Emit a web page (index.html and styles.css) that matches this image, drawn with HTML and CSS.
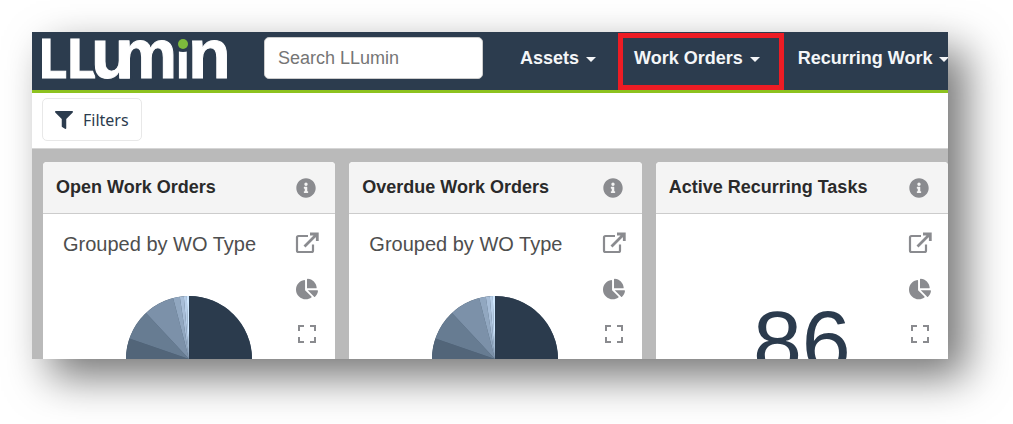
FILE: index.html
```html
<!DOCTYPE html>
<html lang="en">
<head>
    <meta charset="utf-8" />
    <title>LLumin</title>
    <link rel="stylesheet" href="styles.css">
</head>
<body>
    <svg class="sprite" aria-hidden="true">
        <symbol id="info" viewBox="0 0 512 512">
            <path d="M256 8C119 8 8 119 8 256s111 248 248 248 248-111 248-248S393 8 256 8zm0 110c23.200 0 42 18.800 42 42s-18.800 42-42 42-42-18.800-42-42 18.800-42 42-42zm56 254c0 6.600-5.400 12-12 12h-88c-6.600 0-12-5.400-12-12v-24c0-6.600 5.400-12 12-12h12v-64h-12c-6.600 0-12-5.400-12-12v-24c0-6.600 5.400-12 12-12h64c6.600 0 12 5.400 12 12v100h12c6.600 0 12 5.400 12 12z"/>
        </symbol>
        <symbol id="external" viewBox="0 0 24 22">
            <path d="M13 4H3.500a1.500 1.500 0 0 0-1.500 1.500v13a1.500 1.500 0 0 0 1.500 1.500h13a1.500 1.500 0 0 0 1.500-1.500V12.500" fill="none" stroke="currentColor" stroke-width="2.200"/>
            <path d="M9.500 14.500L21 3M15 2h7.300v7" fill="none" stroke="currentColor" stroke-width="2.800"/>
        </symbol>
        <symbol id="pie" viewBox="0 0 544 512">
            <path d="M527.800 288H290.500l158 158c6 6 15.800 6.500 21.900.5 38.700-36.500 65.300-85.700 73.100-141.100 1.400-9.200-6.500-17.400-15.700-17.400zM511.900 223.200C503.700 103.700 408.300 8.300 288.800.040 279.700-.6 272 7.100 272 16.200V240h223.800c9.200 0 16.800-7.700 16.100-16.800zM224 288V50.700c0-9.200-8.200-17.100-17.300-15.800C86.700 51.800-4.100 156.300.100 281.500 4.500 410.100 115.600 513.600 244.300 512c50.500-.6 97.300-16.900 135.500-44.200 7.900-5.600 8.400-17.200 1.600-24z"/>
        </symbol>
        <symbol id="expand" viewBox="0 0 20 20">
            <path d="M2 7V2h5M13 2h5v5M18 13v5h-5M7 18H2v-5" fill="none" stroke="currentColor" stroke-width="2"/>
        </symbol>
        <symbol id="chart" viewBox="0 0 126 126">
            <circle cx="63" cy="63" r="63" fill="#3d5064"/>
            <path fill="#2b3b4d" d="M63 63V0a63 63 0 0 1 0 126z"/>
            <path fill="#526579" d="M63 63L3.800 84.500A63 63 0 0 1 3.400 42.500z"/>
            <path fill="#677c92" d="M63 63L3.400 42.500A63 63 0 0 1 20 16.900z"/>
            <path fill="#7c91a9" d="M63 63L20 16.900A63 63 0 0 1 47.100 2z"/>
            <path fill="#91a7c0" d="M63 63L47.100 2A63 63 0 0 1 53.800 .7z"/>
            <path fill="#a7bdd7" d="M63 63L53.800 .7A63 63 0 0 1 57.800 .2z"/>
            <path fill="#b8cfe9" d="M63 63L57.800 .2A63 63 0 0 1 60.800 0z"/>
            <path fill="#d0e8ff" d="M63 63L60.800 0H63z"/>
        </symbol>
    </svg>

    <div class="screen">
        <header class="navbar">
            <a class="logo" href="#" aria-label="LLumin">
                <svg width="186" height="46" viewBox="0 0 186 46">
                    <text class="logo-cap" x="-5" y="43">L</text>
                    <text class="logo-cap" x="24" y="43">L</text>
                    <text class="logo-low logo-cut" x="49" y="43">u</text>
                    <text class="logo-low" x="49" y="43">u</text>
                    <text class="logo-low" x="73" y="43">m</text>
                    <text class="logo-i" x="134" y="43">i</text>
                    <text class="logo-low" x="146" y="43">n</text>
                    <circle cx="141" cy="9" r="8" fill="#2c3c4e"/>
                    <circle cx="141" cy="9" r="5" fill="#7dba3c"/>
                </svg>
            </a>
            <input class="search" type="text" placeholder="Search LLumin" aria-label="Search LLumin">
            <nav class="menu">
                <button class="menu-item">Assets</button>
                <button class="menu-item marked">Work Orders</button>
                <button class="menu-item">Recurring Work</button>
            </nav>
        </header>

        <div class="toolbar">
            <button class="filters">
                <svg width="18" height="18" viewBox="0 0 512 512" fill="currentColor"><path d="M488 0H24C2.700 0-8 25.900 7 41l185 185v206c0 8 4 15 10 20l80 56c16 11 38 0 38-20V226L505 41c15-15 4-41-17-41z"/></svg>
                Filters
            </button>
        </div>

        <main class="cards">
            <section class="card">
                <div class="card-head">
                    <h2>Open Work Orders</h2>
                    <button class="icon" aria-label="Info"><svg width="20" height="20"><use href="#info"/></svg></button>
                </div>
                <div class="card-body">
                    <div class="content">
                        <p class="group">Grouped by WO Type</p>
                        <svg class="chart" width="126" height="126"><use href="#chart"/></svg>
                    </div>
                    <div class="tools">
                        <button class="icon" aria-label="Open"><svg width="24" height="22"><use href="#external"/></svg></button>
                        <button class="icon" aria-label="Chart type"><svg width="22" height="22"><use href="#pie"/></svg></button>
                        <button class="icon" aria-label="Full screen"><svg width="20" height="20"><use href="#expand"/></svg></button>
                    </div>
                </div>
            </section>

            <section class="card">
                <div class="card-head">
                    <h2>Overdue Work Orders</h2>
                    <button class="icon" aria-label="Info"><svg width="20" height="20"><use href="#info"/></svg></button>
                </div>
                <div class="card-body">
                    <div class="content">
                        <p class="group">Grouped by WO Type</p>
                        <svg class="chart" width="126" height="126"><use href="#chart"/></svg>
                    </div>
                    <div class="tools">
                        <button class="icon" aria-label="Open"><svg width="24" height="22"><use href="#external"/></svg></button>
                        <button class="icon" aria-label="Chart type"><svg width="22" height="22"><use href="#pie"/></svg></button>
                        <button class="icon" aria-label="Full screen"><svg width="20" height="20"><use href="#expand"/></svg></button>
                    </div>
                </div>
            </section>

            <section class="card">
                <div class="card-head">
                    <h2>Active Recurring Tasks</h2>
                    <button class="icon" aria-label="Info"><svg width="20" height="20"><use href="#info"/></svg></button>
                </div>
                <div class="card-body">
                    <div class="content">
                        <p class="count">86</p>
                    </div>
                    <div class="tools">
                        <button class="icon" aria-label="Open"><svg width="24" height="22"><use href="#external"/></svg></button>
                        <button class="icon" aria-label="Chart type"><svg width="22" height="22"><use href="#pie"/></svg></button>
                        <button class="icon" aria-label="Full screen"><svg width="20" height="20"><use href="#expand"/></svg></button>
                    </div>
                </div>
            </section>
        </main>
    </div>
</body>
</html>
```
FILE: styles.css
```css
* {
    box-sizing: border-box;
}

body {
    margin: 0;
    padding: 32px 65px 65px 32px;
    height: 100vh;
    overflow: hidden;
    background-color: #FFF;
    font-family: "Liberation Sans", Arial, sans-serif;
}

button {
    margin: 0;
    padding: 0;
    border: none;
    background: none;
    font-family: inherit;
    cursor: pointer;
}

svg {
    display: block;
}

.sprite {
    position: absolute;
    width: 0;
    height: 0;
}

.screen {
    height: 100%;
    display: flex;
    flex-direction: column;
    overflow: hidden;
    background-color: #BABABA;
    box-shadow: 18px 18px 40px rgba(0, 0, 0, 0.54);
}

.navbar {
    flex: none;
    display: flex;
    align-items: flex-start;
    height: 61px;
    padding: 0 0 0 10px;
    background-color: #2C3C4E;
    border-bottom: 3px solid #8DC21F;
}

.logo {
    flex: none;
    padding-top: 3px;
}

.logo text {
    fill: #FFF;
    stroke: #FFF;
    stroke-width: 1px;
    font-weight: bold;
}

.logo-cap {
    font-family: "Open Sans", sans-serif;
    font-size: 54px;
}

.logo-low {
    font-size: 70px;
}

.logo-i {
    font-size: 49px;
}

.logo .logo-cut {
    stroke: #2C3C4E;
    stroke-width: 6px;
}

.search {
    flex: none;
    width: 219px;
    height: 42px;
    margin: 5px 18px 0 36px;
    padding: 0 13px;
    border: 1px solid #CCC;
    border-radius: 5px;
    background-color: #FFF;
    font-family: inherit;
    font-size: 18px;
}

.search::placeholder {
    color: #757575;
    opacity: 1;
}

.menu {
    display: flex;
    flex: none;
}

.menu-item {
    position: relative;
    display: flex;
    align-items: center;
    gap: 7px;
    height: 52px;
    padding: 0 19px;
    color: #F4F6F8;
    font-size: 18px;
    font-weight: bold;
    white-space: nowrap;
}

.menu-item::after {
    content: "";
    margin-top: 3px;
    border: 5px solid transparent;
    border-top-color: #F4F6F8;
    border-bottom: none;
}

.marked::before {
    content: "";
    position: absolute;
    top: 1px;
    right: -5px;
    bottom: -6px;
    left: 3px;
    border: 5px solid #ED1C24;
}

.toolbar {
    flex: none;
    padding: 5px 10px 7px;
    background-color: #FFF;
    border-bottom: 1px solid #D5D5D5;
}

.filters {
    display: flex;
    align-items: center;
    gap: 10px;
    height: 43px;
    padding: 0 12px;
    border: 1px solid #E8E8E8;
    border-radius: 5px;
    color: #2C3C4E;
    font-family: "Noto Sans", sans-serif;
    font-size: 16px;
}

.cards {
    flex: 1;
    display: grid;
    grid-template-columns: repeat(3, minmax(0, 1fr));
    gap: 14px;
    padding: 13px 0 0 11px;
}

.card {
    background-color: #FFF;
    border-radius: 4px;
}

.card-head {
    display: flex;
    justify-content: space-between;
    align-items: center;
    height: 52px;
    padding: 0 19px 0 13px;
    background-color: #F4F4F4;
    border-bottom: 1px solid #CCC;
    border-radius: 4px 4px 0 0;
}

.card-head h2 {
    margin: 0;
    color: #2A2A2A;
    font-size: 18px;
}

.icon {
    color: #8A8B8F;
}

.icon svg {
    fill: currentColor;
}

/* chart and tool icons share one cell, so the chart stays centered */
.card-body {
    display: grid;
}

.content,
.tools {
    grid-area: 1 / 1;
}

.content {
    padding-top: 18px;
}

.group {
    margin: 0 0 40px;
    padding-left: 20px;
    color: #4E4E4E;
    font-size: 20px;
    line-height: 24px;
}

.chart {
    margin: 0 auto;
}

.count {
    margin: 0;
    padding-top: 60px;
    color: #2B3B4D;
    font-size: 88px;
    line-height: 100px;
    text-align: center;
}

.tools {
    justify-self: end;
    display: flex;
    flex-direction: column;
    align-items: center;
    gap: 24px;
    padding: 18px 16px 0 0;
}
```
